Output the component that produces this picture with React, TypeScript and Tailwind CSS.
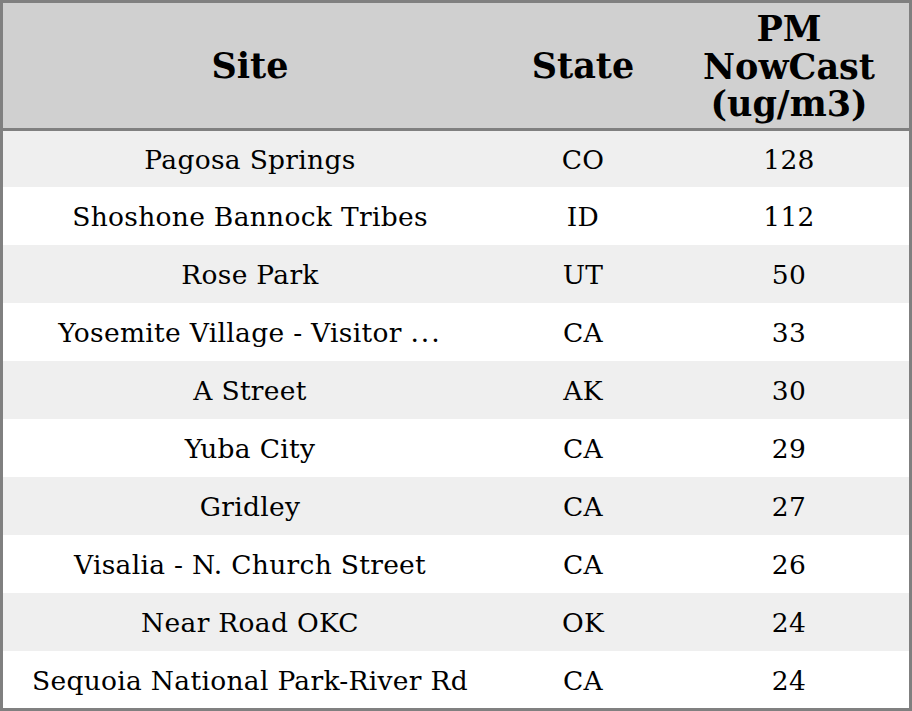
import React from "react";

const rows: [React.ReactNode, string, string][] = [
  ["Pagosa Springs", "CO", "128"],
  ["Shoshone Bannock Tribes", "ID", "112"],
  ["Rose Park", "UT", "50"],
  [
    <span>
      Yosemite Village - Visitor <span className="tracking-[2px]">...</span>
    </span>,
    "CA",
    "33",
  ],
  ["A Street", "AK", "30"],
  ["Yuba City", "CA", "29"],
  ["Gridley", "CA", "27"],
  ["Visalia - N. Church Street", "CA", "26"],
  ["Near Road OKC", "OK", "24"],
  ["Sequoia National Park-River Rd", "CA", "24"],
];

const heights = ["h-[56px]", "h-[58px]", "h-[58px]", "h-[58px]", "h-[58px]", "h-[58px]", "h-[58px]", "h-[58px]", "h-[58px]", "h-[57px]"];

export default function App() {
  return (
    <div
      className="w-[912px] h-[711px] border-[3px] border-[#808080] bg-white text-black flex flex-col"
      style={{ fontFamily: '"DejaVu Serif", serif' }}
    >
      <div className="grid grid-cols-[494px_172px_240px] h-[125px] bg-[#d0d0d0] border-b-[3px] border-[#808080] shrink-0 box-content">
        <div className="flex items-center justify-center text-[35px] font-bold leading-[37.5px] text-center">Site</div>
        <div className="flex items-center justify-center text-[35px] font-bold leading-[37.5px] text-center">State</div>
        <div className="flex items-center justify-center text-[35px] font-bold leading-[37.5px] text-center pt-[2px]">
          PM
          <br />
          NowCast
          <br />
          (ug/m3)
        </div>
      </div>
      {rows.map((r, i) => (
        <div
          key={i}
          className={`grid grid-cols-[494px_172px_240px] ${heights[i]} shrink-0 ${i % 2 === 0 ? "bg-[#efefef]" : "bg-white"}`}
        >
          <div className="flex items-center justify-center pt-[2px] text-[26.5px] tracking-[0.3px] whitespace-nowrap">{r[0]}</div>
          <div className="flex items-center justify-center pt-[2px] text-[26.5px] tracking-[0.3px]">{r[1]}</div>
          <div className="flex items-center justify-center pt-[2px] text-[26.5px] tracking-[0.3px]">{r[2]}</div>
        </div>
      ))}
    </div>
  );
}
